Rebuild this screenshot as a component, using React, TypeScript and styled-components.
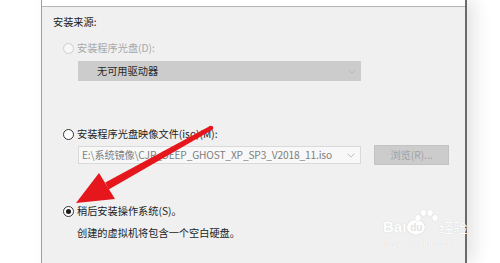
import React from "react";
import styled, { createGlobalStyle } from "styled-components";

const Global = createGlobalStyle`
  html, body {
    margin: 0;
    padding: 0;
    background: #ffffff;
    overflow: hidden;
  }
  body {
    font-family: "Noto Sans CJK SC", "Noto Sans", sans-serif;
  }
`;

const Page = styled.div`
  position: relative;
  width: 500px;
  height: 263px;
  overflow: hidden;
  display: flex;
  box-sizing: border-box;
  padding-left: 41px;
  background: #ffffff;
`;

const Frame = styled.div`
  width: 426px;
  height: 100%;
  box-sizing: border-box;
  border-left: 1px solid #9f9f9f;
  border-right: 2px solid #6b6b6b;
  background: #ffffff;
  padding-top: 6px;
  display: flex;
  flex-direction: column;
  box-shadow: 8px 0 16px rgba(0, 0, 0, 0.1);
`;

const Panel = styled.div`
  flex: 1;
  background: #f0f0f0;
  border-top: 1px solid #b5b5b5;
  box-sizing: border-box;
  padding: 8px 0 0 11px;
  display: flex;
  flex-direction: column;
  align-items: flex-start;
`;

const Text = styled.span<{ $disabled?: boolean }>`
  font-size: 10.2px;
  line-height: 14px;
  color: ${(p) => (p.$disabled ? "#a8a8a8" : "#1c1c1c")};
  white-space: nowrap;
`;

const SectionTitle = styled(Text)`
  display: block;
`;

const RadioRow = styled.div<{ $top: number }>`
  display: flex;
  align-items: center;
  gap: 3px;
  height: 14px;
  margin-left: 10px;
  margin-top: ${(p) => p.$top}px;
`;

const Radio = styled.span<{ $checked?: boolean; $disabled?: boolean }>`
  position: relative;
  width: 11px;
  height: 11px;
  box-sizing: border-box;
  border-radius: 50%;
  border: 1px solid ${(p) => (p.$disabled ? "#cfcfcf" : "#333333")};
  background: ${(p) => (p.$disabled ? "#f7f7f7" : "#ffffff")};
  flex: none;
  &::after {
    content: "";
    display: ${(p) => (p.$checked ? "block" : "none")};
    position: absolute;
    left: 2px;
    top: 2px;
    width: 5px;
    height: 5px;
    border-radius: 50%;
    background: #1a1a1a;
  }
`;

const Combo = styled.div`
  margin-left: 25px;
  margin-top: 6px;
  width: 283px;
  height: 20px;
  box-sizing: border-box;
  background: #cccccc;
  display: flex;
  align-items: center;
  justify-content: space-between;
  padding: 0 5px 0 19px;
`;

const ComboText = styled(Text)`
  color: #2a2a2a;
`;

const FileRow = styled.div`
  display: flex;
  align-items: center;
  gap: 13px;
  margin-left: 25px;
  margin-top: 4px;
  height: 20px;
`;

const PathInput = styled.div`
  width: 283px;
  height: 18px;
  box-sizing: border-box;
  border: 1px solid #d9d9d9;
  background: #f8f8f8;
  display: flex;
  align-items: center;
  justify-content: space-between;
  padding: 0 5px 0 3px;
`;

const PathText = styled(Text)`
  color: #7e7e7e;
  letter-spacing: -0.15px;
`;

const BrowseButton = styled.div`
  width: 75px;
  height: 20px;
  box-sizing: border-box;
  background: #cccccc;
  border: 1px solid #c3c3c3;
  display: flex;
  align-items: center;
  justify-content: center;
`;

const BrowseText = styled(Text)`
  color: #a2a2a2;
`;

const Hint = styled(Text)`
  display: block;
  margin-left: 24px;
  margin-top: 8px;
`;

const Overlay = styled.svg`
  position: absolute;
  left: 0;
  top: 0;
  pointer-events: none;
`;

const Watermark = styled.div`
  position: absolute;
  left: 383px;
  top: 209px;
  display: flex;
  flex-direction: column;
  align-items: flex-start;
  pointer-events: none;
`;

const MarkLine = styled.div`
  position: relative;
  display: flex;
  align-items: flex-end;
  height: 25px;
`;

const MarkWord = styled.span`
  font-family: "Liberation Sans", Arial, sans-serif;
  font-size: 15px;
  line-height: 15px;
  font-weight: bold;
  color: #ffffff;
  text-shadow: 0 0 1px rgba(0, 0, 0, 0.18);
`;

const MarkCjk = styled.span`
  font-family: "Noto Sans CJK SC", sans-serif;
  font-size: 14px;
  line-height: 14px;
  margin-left: 14px;
  color: #ffffff;
  text-shadow: 0 0 1px rgba(0, 0, 0, 0.18);
`;

const MarkSub = styled.span`
  font-family: "Liberation Sans", Arial, sans-serif;
  font-size: 8px;
  line-height: 10px;
  margin-top: 5px;
  color: #ffffff;
  text-shadow: 0 0 1px rgba(0, 0, 0, 0.15);
  letter-spacing: 0.4px;
`;

const PawBox = styled.svg`
  position: absolute;
  left: 30px;
  top: 0;
`;

const DuBadge = styled.span`
  display: inline-flex;
  align-items: center;
  justify-content: center;
  width: 18px;
  height: 14px;
  border-radius: 8px 8px 7px 7px;
  background: #ffffff;
  box-shadow: 0 0 1px rgba(0, 0, 0, 0.25);
  font-family: "Liberation Sans", Arial, sans-serif;
  font-size: 10px;
  font-weight: bold;
  color: #e4e4e4;
  margin-left: 1px;
`;

const Chevron = ({ color }: { color: string }) => (
  <svg width="8" height="5" viewBox="0 0 8 5">
    <polyline points="0.5,0.5 4,4 7.5,0.5" fill="none" stroke={color} strokeWidth="1" />
  </svg>
);

const Paw = () => (
  <PawBox width="27" height="14" viewBox="0 0 27 14">
    <g fill="#ffffff" stroke="rgba(0,0,0,0.12)" strokeWidth="0.5">
      <ellipse cx="5" cy="9" rx="3" ry="3.4" />
      <ellipse cx="10.5" cy="3.8" rx="3" ry="3.4" />
      <ellipse cx="17" cy="3.8" rx="3" ry="3.4" />
      <ellipse cx="22" cy="9" rx="3" ry="3.4" />
    </g>
  </PawBox>
);

export default function App() {
  return (
    <>
      <Global />
      <Page>
        <Frame>
          <Panel>
            <SectionTitle>安装来源:</SectionTitle>
            <RadioRow $top={12}>
              <Radio $disabled />
              <Text $disabled>安装程序光盘(D):</Text>
            </RadioRow>
            <Combo>
              <ComboText>无可用驱动器</ComboText>
              <Chevron color="#b8b8b8" />
            </Combo>
            <RadioRow $top={46}>
              <Radio />
              <Text>安装程序光盘映像文件(iso)(M):</Text>
            </RadioRow>
            <FileRow>
              <PathInput>
                <PathText>E:\系统镜像\CJR_DEEP_GHOST_XP_SP3_V2018_11.iso</PathText>
                <Chevron color="#c2c2c2" />
              </PathInput>
              <BrowseButton>
                <BrowseText>浏览(R)...</BrowseText>
              </BrowseButton>
            </FileRow>
            <RadioRow $top={39}>
              <Radio $checked />
              <Text>稍后安装操作系统(S)。</Text>
            </RadioRow>
            <Hint>创建的虚拟机将包含一个空白硬盘。</Hint>
          </Panel>
        </Frame>
        <Watermark>
          <MarkLine>
            <Paw />
            <MarkWord>Bai</MarkWord>
            <DuBadge>du</DuBadge>
            <MarkCjk>经验</MarkCjk>
          </MarkLine>
          <MarkSub>jingyan.baidu.com</MarkSub>
        </Watermark>
        <Overlay width="500" height="263" viewBox="0 0 500 263">
          <g fill="#e5161c">
            <polygon points="108.7,189.6 105.3,182.4 210,126 212,130" />
            <circle cx="211" cy="128" r="2.3" />
            <polygon points="76,203 99,173 115,199" />
          </g>
        </Overlay>
      </Page>
    </>
  );
}
